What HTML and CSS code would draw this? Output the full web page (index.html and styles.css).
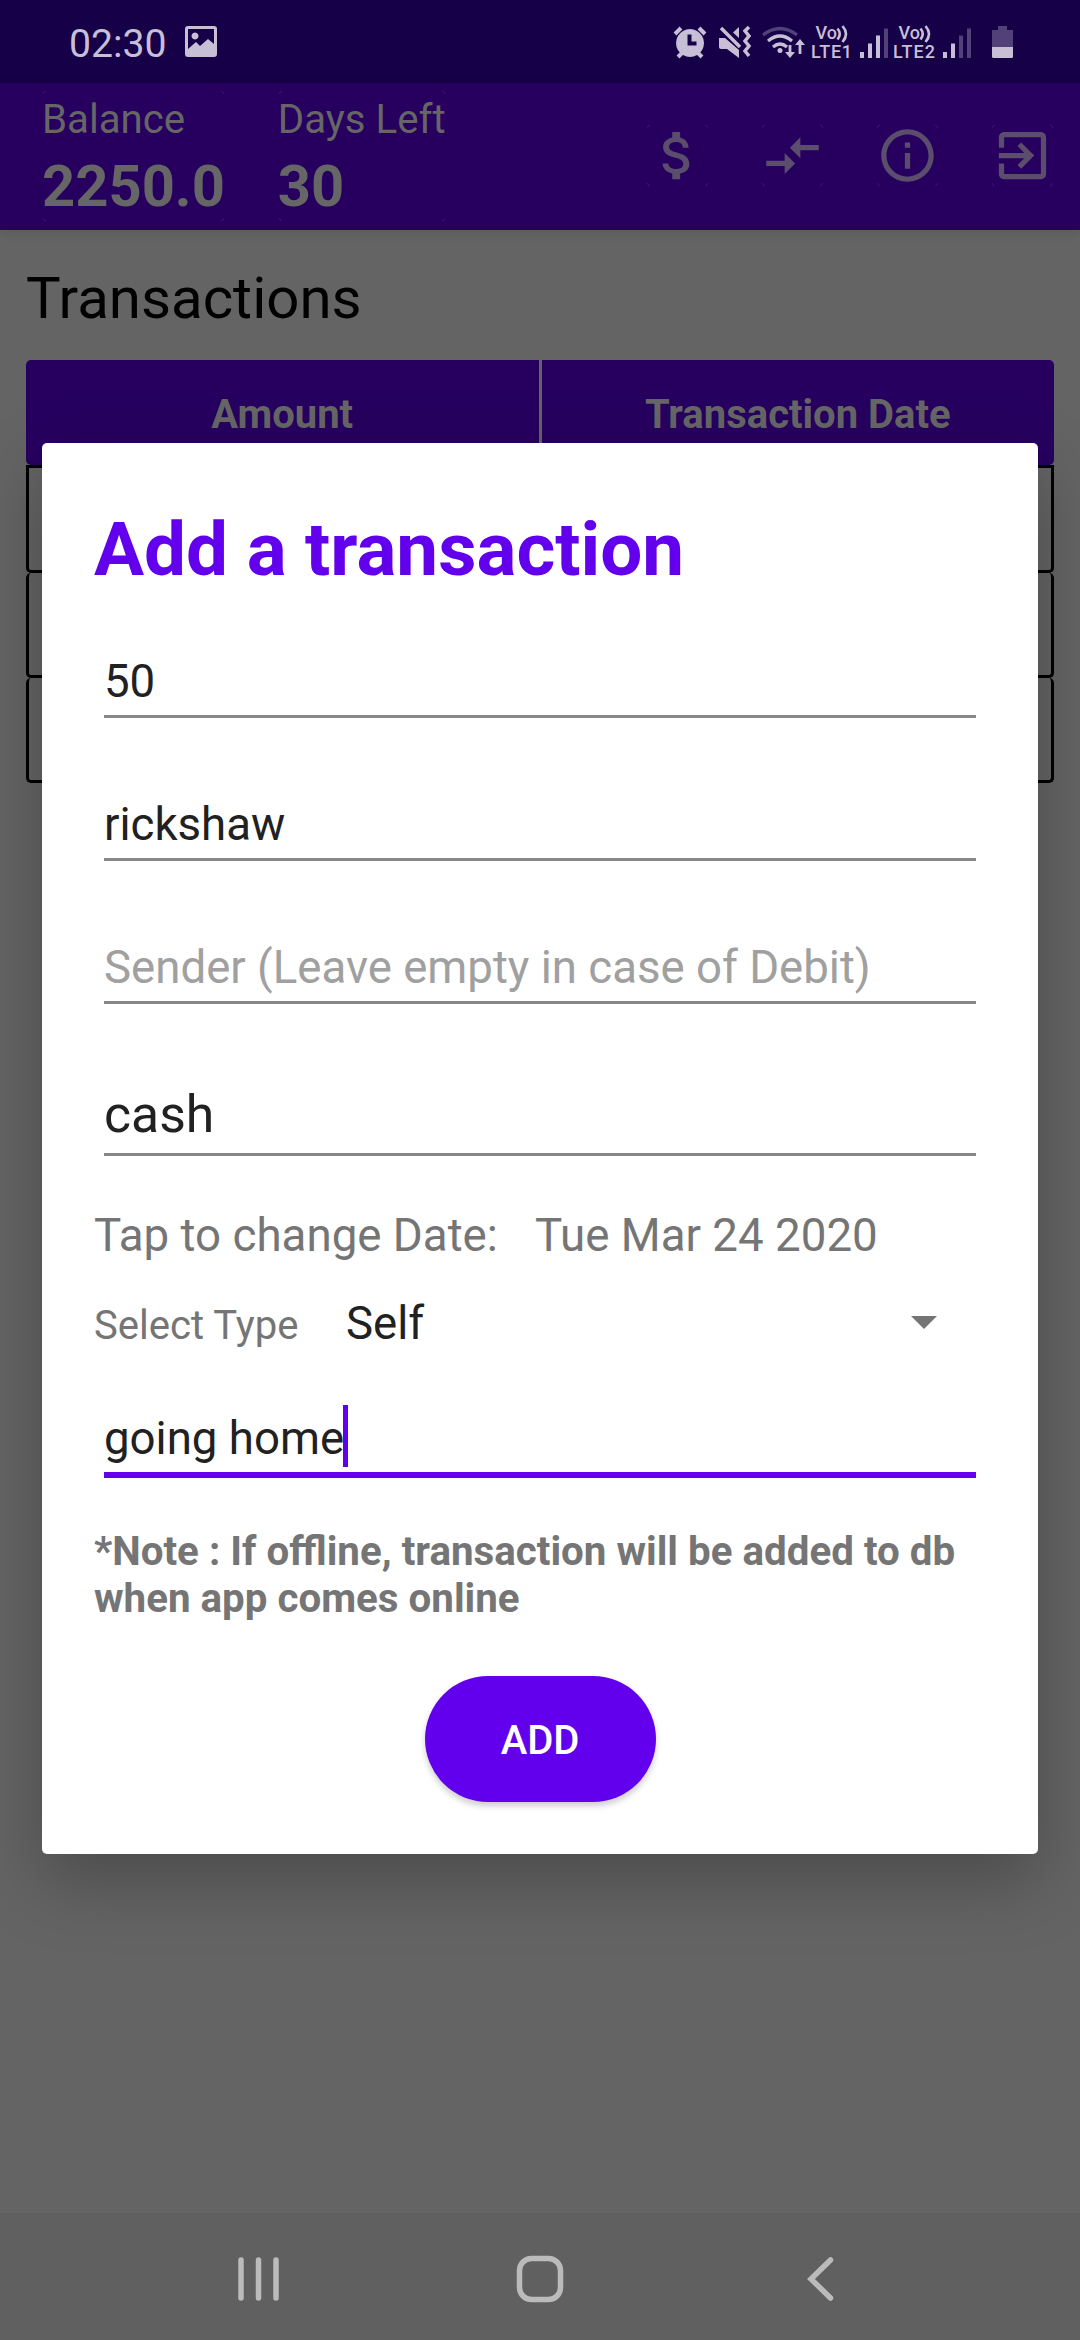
FILE: index.html
```html
<!DOCTYPE html>
<html lang="en">
<head>
<meta charset="utf-8">
<title>Transactions</title>
<link rel="stylesheet" href="styles.css">
</head>
<body>
<div class="screen">
  <header class="status">
    <span class="clock">02:30</span>
    <svg class="picture-icon" viewBox="0 0 32 31"><path fill-rule="evenodd" d="M3 0h26a3 3 0 0 1 3 3v25a3 3 0 0 1-3 3H3a3 3 0 0 1-3-3V3a3 3 0 0 1 3-3zM3 3v20l8-7 4 4 8-7 6 5V3zM10 6.500a3.500 3.500 0 1 0 .01 0z"/></svg>
    <svg class="status-icons" viewBox="0 0 350 40">
      <!-- alarm -->
      <path fill-rule="evenodd" d="M17 9a14 14 0 1 0 .01 0zM14.500 14.500h4v7h5v4h-9z"/>
      <path class="line" stroke-width="4" d="M2 14l6-6M32 14l-6-6M9 33l-4 4M25 33l4 4"/>
      <!-- vibrate -->
      <path d="M46 18h6l14 12v8L54 29h-6q-2 0-2-2zM66 7v11l-6-5.500z"/>
      <path class="line" stroke-width="3.500" d="M48 8l19 19M76 7l-4 4 4 5-4 5 4 5-4 5 4 5"/>
      <!-- wifi -->
      <g class="line" stroke-width="3.200"><path class="dim" d="M90 15q17-13 34 0"/><path d="M95 21q12-10 24 0M100 27q7-6 14 0"/></g>
      <circle cx="107" cy="30.500" r="2.500"/>
      <path class="line" stroke-width="2.800" d="M117 25v9M127 22v12"/>
      <path d="M112 32h10l-5 6zM122 25h10l-5-6z"/>
      <!-- network, with sound waves after each "Vo" -->
      <text x="142.500" y="19" class="net" textLength="21.500">Vo</text><text x="138" y="37.500" class="net" textLength="41">LTE1</text>
      <text x="225.500" y="19" class="net" textLength="21.500">Vo</text><text x="220" y="37.500" class="net" textLength="42">LTE2</text>
      <path class="line" stroke-width="2.600" d="M164.500 8.500q4.500 5.500 0 11M169.500 6q7 8 0 16M247.500 8.500q4.500 5.500 0 11M252.500 6q7 8 0 16"/>
      <path d="M187 32h4v6h-4zM195 23.500h4V38h-4zM203 15.500h4V38h-4z"/><path class="dim" d="M211 8.500h4V38h-4z"/>
      <path d="M270 32h4v6h-4zM278 23.500h4V38h-4z"/><path class="dim" d="M286 15.500h4V38h-4zM294 8.500h4V38h-4z"/>
      <!-- battery -->
      <path class="dim" d="M325 6h9v4h6v17h-21V10h6z"/><path d="M319 27h21v9.500q0 1.500-1.500 1.500h-18q-1.500 0-1.500-1.500z"/>
    </svg>
  </header>

  <header class="appbar">
    <div class="stat ghost"><span class="label">Balance</span><b class="value">2250.0</b></div>
    <div class="stat ghost"><span class="label">Days Left</span><b class="value">30</b></div>
    <nav class="actions">
      <span class="ghost"><svg viewBox="0 0 24 24"><path d="M11.800 10.900c-2.270-.59-3-1.200-3-2.150 0-1.090 1.010-1.850 2.700-1.850 1.780 0 2.440.85 2.500 2.100h2.210c-.07-1.720-1.120-3.300-3.210-3.810V3h-3v2.160c-1.940.42-3.500 1.680-3.500 3.610 0 2.310 1.910 3.460 4.700 4.130 2.500.6 3 1.480 3 2.410 0 .69-.49 1.790-2.700 1.790-2.060 0-2.870-.92-2.980-2.100h-2.200c.12 2.190 1.760 3.420 3.680 3.830V21h3v-2.150c1.950-.37 3.500-1.500 3.500-3.550 0-2.840-2.430-3.810-4.700-4.400z"/></svg></span>
      <span class="ghost"><svg viewBox="0 0 24 24"><path d="M9.010 14H2v2h7.010v3L13 15l-3.990-4v3zm5.980-1v-3H22V8h-7.010V5L11 9l3.990 4z"/></svg></span>
      <span class="ghost"><svg viewBox="0 0 24 24"><path d="M11 7h2v2h-2zm0 4h2v6h-2zm1-9C6.480 2 2 6.480 2 12s4.480 10 10 10 10-4.480 10-10S17.520 2 12 2zm0 18c-4.410 0-8-3.590-8-8s3.590-8 8-8 8 3.590 8 8-3.590 8-8 8z"/></svg></span>
      <span class="ghost"><svg viewBox="0 0 24 24"><path d="M10.090 15.590L11.500 17l5-5-5-5-1.410 1.410L12.670 11H3v2h9.670l-2.580 2.590zM19 3H5c-1.110 0-2 .9-2 2v4h2V5h14v14H5v-4H3v4c0 1.100.89 2 2 2h14c1.100 0 2-.9 2-2V5c0-1.100-.9-2-2-2z"/></svg></span>
    </nav>
  </header>

  <main class="content">
    <h1>Transactions</h1>
    <div class="table">
      <div class="thead"><span>Amount</span><span>Transaction Date</span></div>
      <div class="row"></div>
      <div class="row"></div>
      <div class="row"></div>
    </div>
  </main>

  <footer class="navbar">
    <svg viewBox="0 0 1080 127">
      <path d="M241 47v38M258.500 47v38M276 47v38"/>
      <rect x="519.500" y="45.500" width="41" height="41" rx="12"/>
      <path d="M830.500 47L811 66l19.500 19"/>
    </svg>
  </footer>

  <section class="dialog">
    <h2>Add a transaction</h2>
    <div class="field"><span>50</span></div>
    <div class="field"><span>rickshaw</span></div>
    <div class="field hint"><span>Sender (Leave empty in case of Debit)</span></div>
    <div class="field large"><span>cash</span></div>
    <div class="date"><span>Tap to change Date:</span><span>Tue Mar 24 2020</span></div>
    <div class="type"><span class="type-label">Select Type</span><span class="type-value">Self</span><i class="caret"></i></div>
    <div class="field active"><span>going home</span><i class="cursor"></i></div>
    <p class="note">*Note : If offline, transaction will be added to db when app comes online</p>
    <button class="add">ADD</button>
  </section>
</div>
</body>
</html>
```

FILE: styles.css
```css
* { box-sizing: border-box; margin: 0; padding: 0; }
body { font-family: Roboto, "Liberation Sans", sans-serif; background: #646464; }
.screen { position: relative; width: 1080px; height: 2340px; display: flex; flex-direction: column; overflow: hidden; background: #646464; }
h1, h2, p, span, b { white-space: nowrap; }

.status { height: 83px; background: #160048; display: flex; align-items: flex-start; padding: 20px 57px 0 69px; color: #c7bfd5; fill: #c7bfd5; }
.clock { font-size: 39.200px; line-height: 48px; width: 116px; }
.picture-icon { width: 32px; height: 31px; margin-top: 6px; }
.status-icons { width: 350px; height: 40px; margin-left: auto; overflow: visible; }
.status-icons .line { fill: none; stroke: #c7bfd5; }
.status-icons .dim { opacity: .34; }
.net { font-size: 18px; font-weight: 500; }

.appbar { height: 147px; background: #27005f; display: flex; align-items: flex-start; padding: 7px 26px 0 42px; gap: 53px; color: #666; position: relative; z-index: 1; box-shadow: 0 2px 10px rgba(0, 0, 0, .12); }
.stat { height: 132px; display: flex; flex-direction: column; padding-top: 6px; }
.label { font-size: 40.200px; line-height: 47px; }
.value { font-size: 57.900px; line-height: 68px; margin-top: 9px; }
.ghost { position: relative; }
.ghost::after {
  content: ""; position: absolute; inset: 0; border: 1px solid #40226c; border-radius: 6px;
  mask: linear-gradient(#000, #000) 0 0 / 4px 4px no-repeat, linear-gradient(#000, #000) 100% 0 / 4px 4px no-repeat, linear-gradient(#000, #000) 0 100% / 4px 4px no-repeat, linear-gradient(#000, #000) 100% 100% / 4px 4px no-repeat;
}
.actions { display: flex; gap: 52px; margin: 34px 0 0 auto; fill: #5b4d6c; }
.actions span, .actions svg { display: block; width: 63px; height: 63px; }

.content { flex: 1; padding: 34px 26px 0; }
h1 { font-size: 58.200px; line-height: 68px; font-weight: 400; color: #000; }
.table { margin-top: 28px; }
.thead { height: 105px; display: grid; grid-template-columns: 1fr 1fr; gap: 3px; color: #666; font-size: 40px; font-weight: 700; text-align: center; line-height: 109px; }
.thead span { background: #27005f; height: 105px; }
.thead span:first-child { border-radius: 5px 0 0 5px; }
.thead span:last-child { border-radius: 0 5px 5px 0; }
.row { height: 105px; border: solid #000; border-width: 0 3px 3px; border-radius: 5px; }
.thead + .row { height: 108px; border-top-width: 3px; border-radius: 0 0 5px 5px; }

.navbar { height: 127px; background: #606060; }
.navbar svg { display: block; width: 1080px; height: 127px; fill: none; stroke: #bbb; stroke-width: 5.500px; stroke-linecap: round; stroke-linejoin: miter; }

.dialog { position: absolute; left: 42px; top: 443px; z-index: 2; width: 996px; height: 1411px; background: #fff; border-radius: 5px; padding: 63px 52px 0; box-shadow: 0 26px 70px rgba(0, 0, 0, .26); display: flex; flex-direction: column; color: #212121; }
h2 { font-size: 74.600px; line-height: 87px; margin-bottom: -1px; font-weight: 700; color: #6200ee; }
.field { height: 143px; margin: 0 10px; border-bottom: 3px solid #888; font-size: 45.600px; display: flex; align-items: flex-end; line-height: 56px; padding-bottom: 5px; }
h2 + .field { height: 126px; }
.hint { color: #a0a0a0; }
.large { height: 152px; font-size: 51.700px; line-height: 62px; padding-bottom: 7px; }
.date { margin-top: 53px; display: flex; gap: 37px; font-size: 45.700px; line-height: 54px; color: #757575; }
.type { margin-top: 34px; height: 58px; display: flex; align-items: baseline; }
.type-label { font-size: 40.100px; color: #757575; width: 252px; }
.type-value { font-size: 45.600px; line-height: 54px; }
.caret { margin: 0 49px 7px auto; align-self: center; width: 26px; height: 13px; background: #757575; clip-path: polygon(0 0, 100% 0, 50% 100%); }
.active { height: 83px; margin-top: 40px; border-bottom: 6px solid #6200ee; }
.cursor { width: 5px; height: 62px; background: #6200ee; margin-left: -1px; }
.note { margin-top: 50px; white-space: normal; font-size: 40.300px; line-height: 47px; font-weight: 700; color: #757575; }
.add { align-self: center; margin-top: 54px; width: 231px; height: 126px; border: 0; border-radius: 63px; background: #6200ee; color: #fff; font: 500 40px/130px Roboto, sans-serif; box-shadow: 0 4px 6px rgba(0, 0, 0, .2); }
```
